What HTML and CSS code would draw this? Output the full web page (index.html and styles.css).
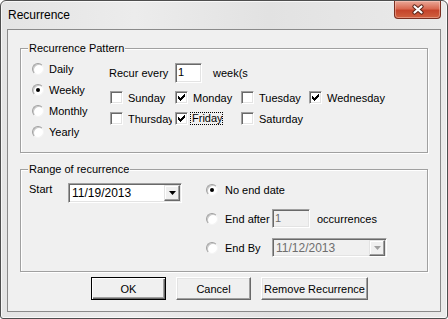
FILE: index.html
```html
<!DOCTYPE html>
<html lang="en">
<head>
    <meta charset="UTF-8">
    <title>Recurrence</title>
    <link rel="stylesheet" href="styles.css">
</head>
<body>
    <div class="window">
        <div class="titlebar">
            <span class="title">Recurrence</span>
            <span class="close">
                <svg width="14" height="11" viewBox="0 0 14 11">
                    <path d="M3.5 2.5 L10.5 8.5 M10.5 2.5 L3.5 8.5" stroke="#5a2418" stroke-width="4.2" stroke-linecap="round"/>
                    <path d="M3.5 2.5 L10.5 8.5 M10.5 2.5 L3.5 8.5" stroke="#fff" stroke-width="2.2" stroke-linecap="round"/>
                </svg>
            </span>
        </div>
        <div class="client">
            <fieldset class="group">
                <legend>Recurrence Pattern</legend>
                <div class="pattern-body">
                    <div class="freq">
                        <div class="radio-row"><span class="rb"></span>Daily</div>
                        <div class="radio-row"><span class="rb on"></span>Weekly</div>
                        <div class="radio-row"><span class="rb"></span>Monthly</div>
                        <div class="radio-row"><span class="rb"></span>Yearly</div>
                    </div>
                    <div class="weekly">
                        <div class="recur">
                            <span class="recur-label">Recur every</span>
                            <span class="field count">1</span>
                            <span>week(s</span>
                        </div>
                        <div class="days">
                            <div class="check"><span class="cb"></span>Sunday</div>
                            <div class="check"><span class="cb"><svg width="7" height="7" viewBox="0 0 7 7"><path d="M0 2h1v3H0zM1 3h1v3H1zM2 4h1v3H2zM3 3h1v3H3zM4 2h1v3H4zM5 1h1v3H5zM6 0h1v3H6z"/></svg></span>Monday</div>
                            <div class="check"><span class="cb"></span>Tuesday</div>
                            <div class="check"><span class="cb"><svg width="7" height="7" viewBox="0 0 7 7"><path d="M0 2h1v3H0zM1 3h1v3H1zM2 4h1v3H2zM3 3h1v3H3zM4 2h1v3H4zM5 1h1v3H5zM6 0h1v3H6z"/></svg></span>Wednesday</div>
                            <div class="check"><span class="cb"></span><span class="clip">Thursday</span></div>
                            <div class="check"><span class="cb"><svg width="7" height="7" viewBox="0 0 7 7"><path d="M0 2h1v3H0zM1 3h1v3H1zM2 4h1v3H2zM3 3h1v3H3zM4 2h1v3H4zM5 1h1v3H5zM6 0h1v3H6z"/></svg></span><span class="focus">Friday</span></div>
                            <div class="check"><span class="cb"></span>Saturday</div>
                        </div>
                    </div>
                </div>
            </fieldset>

            <fieldset class="group range">
                <legend>Range of recurrence</legend>
                <div class="range-body">
                    <div class="start">
                        <span class="start-label">Start</span>
                        <div class="combo">
                            <span class="value">11/19/2013</span>
                            <span class="drop"><svg width="7" height="4" viewBox="0 0 7 4"><path d="M0 0h7L3.5 4z"/></svg></span>
                        </div>
                    </div>
                    <div class="ends">
                        <div class="end-row"><span class="rb on"></span><span class="end-label">No end date</span></div>
                        <div class="end-row">
                            <span class="rb"></span><span class="end-label">End after</span>
                            <span class="field occ disabled">1</span>
                            <span>occurrences</span>
                        </div>
                        <div class="end-row">
                            <span class="rb"></span><span class="end-label">End By</span>
                            <div class="combo end-combo disabled">
                                <span class="value">11/12/2013</span>
                                <span class="drop"><svg width="7" height="4" viewBox="0 0 7 4"><path d="M0 0h7L3.5 4z"/></svg></span>
                            </div>
                        </div>
                    </div>
                </div>
            </fieldset>

            <div class="buttons">
                <button class="btn default">OK</button>
                <button class="btn">Cancel</button>
                <button class="btn wide">Remove Recurrence</button>
            </div>
        </div>
    </div>
</body>
</html>
```

FILE: styles.css
```css
body {
    margin: 0;
    font-family: 'Liberation Sans', Arial, sans-serif;
    font-size: 11px;
    color: #000;
    background: #fff;
}
.window {
    width: 448px;
    height: 319px;
    box-sizing: border-box;
    border: 1px solid #4e4e4e;
    border-radius: 6px 6px 3px 3px;
    padding: 0 6px 6px;
    display: flex;
    flex-direction: column;
    background: linear-gradient(90deg, #e4e4e4, #ececec 30%, #e2e2e2 60%, #eaeaea);
    box-shadow: inset 0 0 0 1px rgba(255, 255, 255, 0.7);
}
.titlebar {
    height: 28px;
    display: flex;
    align-items: flex-start;
}
.title {
    font-size: 12px;
    line-height: 15px;
    padding: 7px 0 0 1px;
}
.close {
    margin-left: auto;
    width: 47px;
    height: 18px;
    box-sizing: border-box;
    border: 1px solid #7a2e20;
    border-top: none;
    border-radius: 0 0 4px 4px;
    background: linear-gradient(#eaa898, #d96a52 45%, #c5442b 55%, #d0603f);
    display: flex;
    align-items: center;
    justify-content: center;
    box-shadow: inset 0 0 0 1px rgba(255, 220, 210, 0.4);
}
.client {
    flex: 1;
    border: 1px solid #8a8a8a;
    background: #f0f0f0;
    padding-top: 12px;
}
.group {
    margin: 0 12px;
    padding: 0;
    border: 1px solid #a0a0a0;
    box-shadow: 1px 1px 0 #fff, inset 1px 1px 0 #fff;
}
.group legend {
    margin-left: 7px;
    padding: 0 1px;
    line-height: 12px;
    background: #f0f0f0;
}
.range {
    margin-top: 10px;
}
.pattern-body {
    display: flex;
    padding: 4px 0 10px 11px;
}
.freq {
    width: 77px;
    display: flex;
    flex-direction: column;
}
.radio-row {
    height: 21px;
    display: flex;
    align-items: center;
    gap: 5px;
}
.rb {
    width: 12px;
    height: 12px;
    box-sizing: border-box;
    border-radius: 50%;
    background: #fff;
    border: 1px solid;
    border-color: #a0a0a0 #f4f4f4 #f4f4f4 #a0a0a0;
    box-shadow: inset 1px 1px 0 #c8c8c8;
    display: flex;
    align-items: center;
    justify-content: center;
    flex-shrink: 0;
}
.rb.on::after {
    content: '';
    width: 4px;
    height: 4px;
    border-radius: 50%;
    background: #000;
}
.recur {
    height: 29px;
    display: flex;
    align-items: center;
}
.recur-label {
    width: 66px;
}
.field {
    box-sizing: border-box;
    height: 20px;
    padding-left: 2px;
    line-height: 16px;
    background: #fff;
    border: 1px solid;
    border-color: #a0a0a0 #fff #fff #a0a0a0;
    box-shadow: inset 1px 1px 0 #696969, inset -1px -1px 0 #e3e3e3;
}
.count {
    width: 27px;
    margin-right: 11px;
}
.days {
    display: grid;
    grid-template-columns: 65px 66px 68px auto;
    grid-auto-rows: 21px;
    padding-left: 1px;
}
.check {
    display: flex;
    align-items: center;
    gap: 5px;
    white-space: nowrap;
}
.cb {
    width: 13px;
    height: 13px;
    box-sizing: border-box;
    background: #fff;
    border: 1px solid;
    border-color: #a0a0a0 #fff #fff #a0a0a0;
    box-shadow: inset 1px 1px 0 #696969, inset -1px -1px 0 #e3e3e3;
    display: flex;
    align-items: center;
    justify-content: center;
    flex-shrink: 0;
}
.cb svg {
    display: block;
}
.clip {
    width: 44px;
    overflow: hidden;
}
.focus {
    width: 29px;
    overflow: hidden;
    line-height: 11px;
    border: 1px dotted #000;
    padding: 0 1px;
    margin-left: -3px;
}
.range-body {
    display: flex;
    padding: 0 0 9px 8px;
}
.start {
    display: flex;
    align-items: flex-start;
    padding-top: 8px;
}
.start-label {
    width: 39px;
    line-height: 13px;
}
.combo {
    width: 114px;
    height: 20px;
    box-sizing: border-box;
    display: flex;
    align-items: center;
    background: #fff;
    border: 1px solid;
    border-color: #a0a0a0 #fff #fff #a0a0a0;
    box-shadow: inset 1px 1px 0 #696969, inset -1px -1px 0 #e3e3e3;
    padding: 1px;
}
.combo .value {
    flex: 1;
    padding-left: 2px;
    font-size: 12px;
}
.drop {
    width: 16px;
    height: 16px;
    box-sizing: border-box;
    background: #f0f0f0;
    border: 1px solid;
    border-color: #e3e3e3 #696969 #696969 #e3e3e3;
    box-shadow: inset -1px -1px 0 #a0a0a0, inset 1px 1px 0 #fff;
    display: flex;
    align-items: center;
    justify-content: center;
}
.drop svg {
    display: block;
}
.ends {
    margin-left: 24px;
    display: flex;
    flex-direction: column;
}
.end-row {
    height: 29px;
    display: flex;
    align-items: center;
    white-space: nowrap;
}
.end-row .rb {
    margin-right: 7px;
}
.end-label {
    min-width: 47px;
}
.occ {
    width: 38px;
    height: 19px;
    margin-right: 7px;
}
.end-combo {
    width: 115px;
    height: 19px;
}
.disabled {
    background: #f0f0f0;
    color: #6d6d6d;
}
.disabled .drop svg path {
    fill: #a0a0a0;
}
.buttons {
    display: flex;
    gap: 10px;
    padding: 5px 0 0 83px;
}
.btn {
    width: 75px;
    height: 23px;
    padding: 0;
    font-family: inherit;
    font-size: 11px;
    color: #000;
    background: #f0f0f0;
    border: 1px solid;
    border-color: #fff #696969 #696969 #fff;
    box-shadow: inset -1px -1px 0 #a0a0a0, inset 1px 1px 0 #e3e3e3;
}
.btn.default {
    border-color: #000;
    box-shadow: inset 1px 1px 0 #fff, inset -1px -1px 0 #696969, inset -2px -2px 0 #a0a0a0;
}
.btn.wide {
    width: 107px;
}
```
